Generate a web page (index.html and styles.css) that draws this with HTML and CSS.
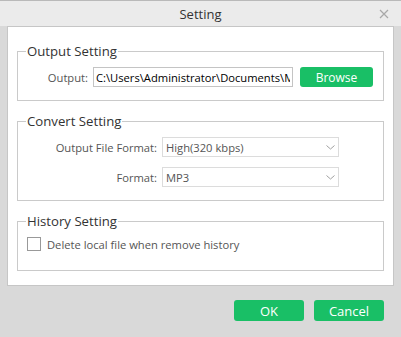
FILE: index.html
```html
<!DOCTYPE html>
<html lang="en">
<head>
    <meta charset="UTF-8">
    <meta name="viewport" content="width=device-width, initial-scale=1.0">
    <title>Setting</title>
    <link rel="stylesheet" href="styles.css">
</head>
<body>

<div class="window">
    <!-- Title bar -->
    <div class="titlebar">
        <span></span>
        <span class="title">Setting</span>
        <span class="close">
            <svg width="10" height="10" viewBox="0 0 10 10"><path d="M1 1 L9 9 M9 1 L1 9" stroke="#a8a8a8" stroke-width="1.2" fill="none"/></svg>
        </span>
    </div>

    <!-- Settings panel -->
    <div class="panel">
        <fieldset class="group group-output">
            <legend>Output Setting</legend>
            <div class="row">
                <label class="label label-short">Output:</label>
                <input class="path-input" type="text" value="C:\Users\Administrator\Documents\MusicDownloads">
                <button class="green-btn browse-btn">Browse</button>
            </div>
        </fieldset>

        <fieldset class="group group-convert">
            <legend>Convert Setting</legend>
            <div class="row">
                <label class="label label-long">Output File Format:</label>
                <div class="select">
                    <span>High(320 kbps)</span>
                    <svg width="9" height="5" viewBox="0 0 9 5"><path d="M0.5 0.5 L4.5 4 L8.5 0.5" stroke="#a0a0a0" stroke-width="1" fill="none"/></svg>
                </div>
            </div>
            <div class="row row-gap">
                <label class="label label-long">Format:</label>
                <div class="select">
                    <span>MP3</span>
                    <svg width="9" height="5" viewBox="0 0 9 5"><path d="M0.5 0.5 L4.5 4 L8.5 0.5" stroke="#a0a0a0" stroke-width="1" fill="none"/></svg>
                </div>
            </div>
        </fieldset>

        <fieldset class="group group-history">
            <legend>History Setting</legend>
            <div class="check-row">
                <span class="checkbox"></span>
                <span class="check-label">Delete local file when remove history</span>
            </div>
        </fieldset>
    </div>

    <!-- Dialog buttons -->
    <div class="actions">
        <button class="green-btn action-btn">OK</button>
        <button class="green-btn action-btn">Cancel</button>
    </div>
</div>

</body>
</html>
```

FILE: styles.css
```css
body {
    margin: 0;
    font-family: "Open Sans", "Noto Sans", sans-serif;
}
.window {
    width: 401px;
    height: 337px;
    background-color: #d9d9d9;
    box-sizing: border-box;
}
.titlebar {
    height: 26px;
    box-sizing: border-box;
    border-top: 1px solid #b9b9b9;
    background-color: #ebebeb;
    display: grid;
    grid-template-columns: 1fr auto 1fr;
    align-items: center;
}
.title {
    font-size: 13px;
    color: #333;
}
.close {
    justify-self: end;
    margin-right: 12px;
    display: flex;
}
.panel {
    margin: 0 7px 0 7px;
    background-color: white;
    border: 1px solid #c6c6c6;
    padding: 15px 9px 14px 9px;
}
.group {
    margin: 0;
    border: 1px solid #cacaca;
    padding: 7px 8px 0 8px;
    box-sizing: border-box;
}
.group legend {
    font-size: 13.2px;
    line-height: 18px;
    color: #333;
    padding: 0 1px;
}
.group-output {
    height: 59px;
}
.group-convert {
    height: 89px;
    margin-top: 11px;
}
.group-history {
    height: 59px;
    margin-top: 11px;
}
.row {
    display: flex;
    align-items: center;
    height: 20px;
}
.row-gap {
    margin-top: 10px;
}
.label {
    font-size: 11.2px;
    color: #555;
    text-align: right;
    margin-right: 5px;
}
.label-short {
    width: 62px;
}
.label-long {
    width: 131px;
}
.path-input {
    width: 200px;
    height: 20px;
    box-sizing: border-box;
    border: 1px solid #c4c4c4;
    padding: 0 2px;
    margin: 0;
    font-family: "Open Sans", "Noto Sans", sans-serif;
    font-size: 11.2px;
    color: #000;
    outline: none;
}
.green-btn {
    background-color: #19bf66;
    color: white;
    border: none;
    border-radius: 3px;
    font-family: "Open Sans", "Noto Sans", sans-serif;
    font-size: 12px;
    padding: 0;
}
.browse-btn {
    width: 73px;
    height: 20px;
    margin-left: 7px;
}
.select {
    width: 177px;
    height: 20px;
    box-sizing: border-box;
    border: 1px solid #dcdcdc;
    display: flex;
    align-items: center;
    justify-content: space-between;
    padding: 0 3px 0 3px;
    font-size: 11.2px;
    color: #555;
}
.check-row {
    display: flex;
    align-items: center;
    height: 14px;
    margin-left: 1px;
}
.checkbox {
    width: 14px;
    height: 14px;
    box-sizing: border-box;
    border: 1px solid #999;
    background-color: white;
}
.check-label {
    font-size: 11.2px;
    color: #555;
    margin-left: 6px;
}
.actions {
    display: flex;
    justify-content: flex-end;
    gap: 10px;
    padding-right: 17px;
    margin-top: 14px;
}
.action-btn {
    width: 70px;
    height: 21px;
    font-size: 13px;
}
```
